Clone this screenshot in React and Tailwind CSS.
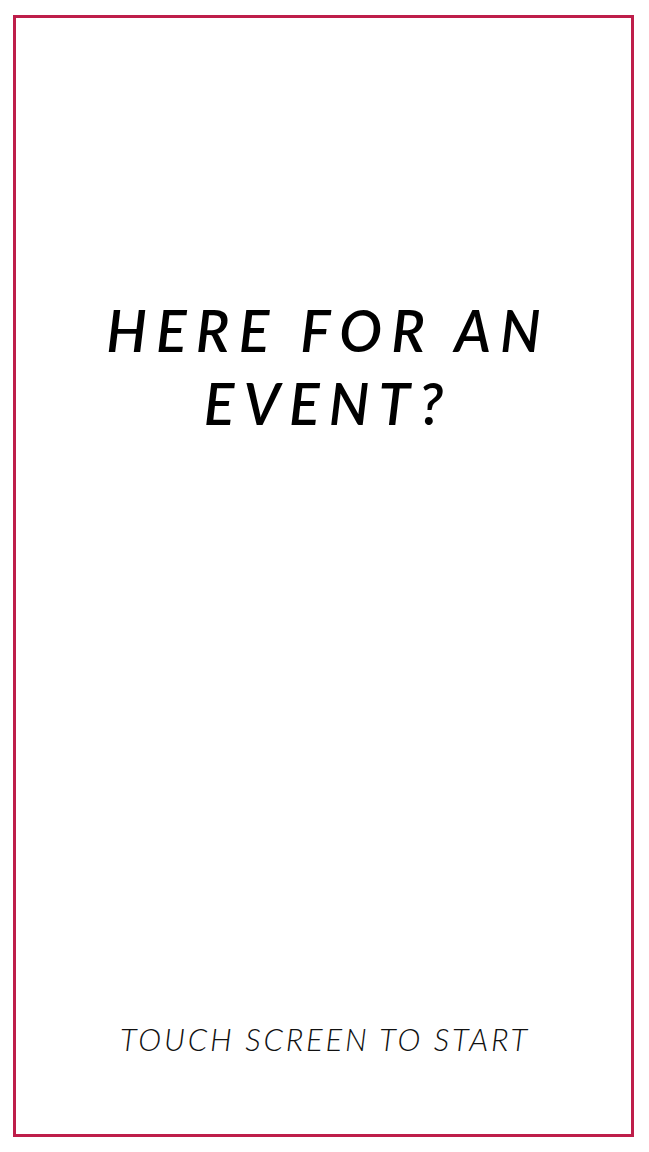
export default function App() {
  return (
    <div className="w-[649px] h-[1152px] bg-white pt-[15px] pl-[13px]" style={{ fontFamily: 'Lato, "Noto Sans", sans-serif' }}>
      <div className="w-[621px] h-[1122px] border-[3px] border-[#be1e4a] flex flex-col items-center">
        <div className="mt-[276px] pl-[0.16em] text-center text-black italic font-semibold text-[57px] leading-[73px] tracking-[0.16em]">
          <div>HERE FOR AN</div>
          <div>EVENT?</div>
        </div>
        <div className="mt-auto mb-[72px] pl-[0.09em] text-[#111] italic font-light text-[31px] tracking-[0.09em]">
          TOUCH SCREEN TO START
        </div>
      </div>
    </div>
  );
}
